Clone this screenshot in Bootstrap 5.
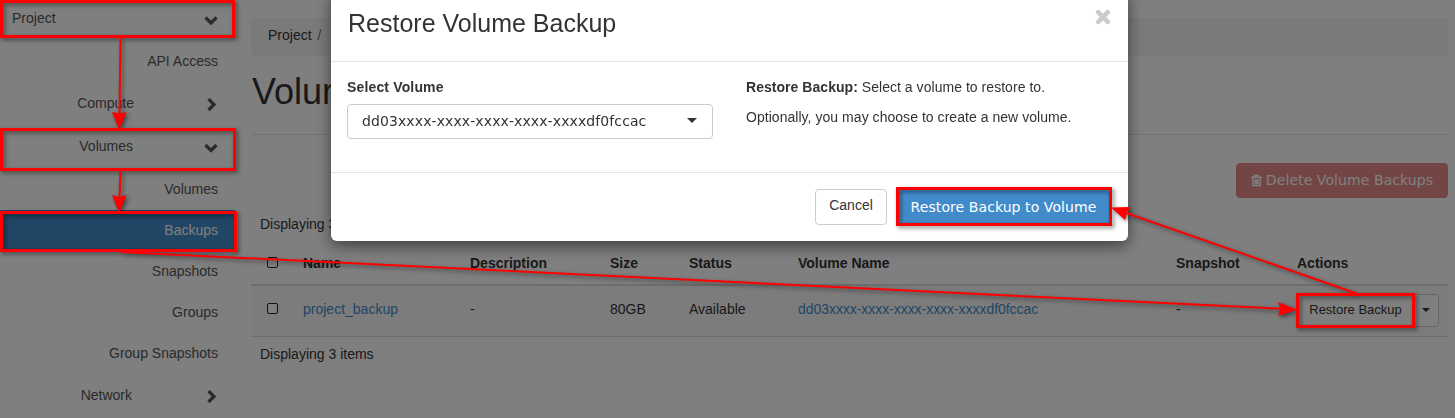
<!DOCTYPE html>
<html lang="en">
<head>
<meta charset="utf-8">
<meta name="viewport" content="width=device-width, initial-scale=1">
<title>Volume Backups</title>
<link href="https://cdn.jsdelivr.net/npm/bootstrap@5.3.0/dist/css/bootstrap.min.css" rel="stylesheet">
<style>
body{font-family:"Liberation Sans",Arial,sans-serif;font-size:14px;line-height:20px;color:#333;background:#fff;height:418px;overflow:hidden}
.wide-face{font-family:"DejaVu Sans",sans-serif}
.side{width:235px;flex:none}
.side-row{height:42px;padding:0 17px 0 0;color:#555;flex:none}
.side-row.top-level{height:40px;padding:0 17px 4px 12px}
.side-row.sub{height:41px;padding-bottom:2px}
.side-row.grp{width:235px}
.grp span{width:134px;text-align:right}
.side-row.chosen{background:#428bca;color:#fff}
.side-row svg{width:14px;height:14px;fill:none;stroke:#555;stroke-width:3.2;margin-top:4px}
.content{margin-left:16px;width:1197px;flex:none;padding-top:18px}
.crumbs{height:38px;background:#f5f5f5;border-radius:4px;padding:7px 17px 0;margin:0}
.page-title{font-size:36px;line-height:40px;margin:16px 0 0 1px;color:#333}
.rule{height:1px;background:#e5e5e5;margin-top:22px}
.btn-del{background:#e78d8a;border:1px solid #e48481;color:#fff;height:35px;width:212px;border-radius:4px;margin-top:28px;font-size:14px;letter-spacing:.08px;padding:0;white-space:nowrap}
.grid-table{table-layout:fixed;width:1197px;margin:0;color:#333;--bs-table-bg:transparent}
.grid-table th{height:42px;padding:0 8px 2px;border-bottom:2px solid #ddd;vertical-align:middle}
.grid-table td{height:51px;padding:0 8px 4px;border-bottom:1px solid #ddd;background:#f9f9f9;vertical-align:middle}
.grid-table a{color:#428bca;text-decoration:none}
.box{display:block;width:11px;height:11px;border:1px solid #222;border-radius:2px;background:#fff;margin-left:8px}
.act{height:33px;border:1px solid #ccc;background:#fff;font-size:13px;color:#333;border-radius:4px;padding:0;width:142px}
.act .lbl{width:116px;text-align:center;border-right:1px solid #ccc;line-height:29px;padding-bottom:2px}
.tri{width:0;height:0;border:4.500px solid transparent;border-top-color:#333;border-bottom:0}
.modal-dialog{width:797px;max-width:797px;margin:-10px 0 0 331px}
.modal-content{height:251px;border:0;border-radius:6px;box-shadow:0 5px 15px rgba(0,0,0,.5);color:#333}
.modal-header{height:72px;padding:15px 16px;border-bottom:1px solid #e5e5e5;align-items:flex-start;flex:none}
.modal-title{font-size:25px;line-height:36px;padding-left:1px}
.modal-body{padding:15px 16px 0;letter-spacing:.04px}
.modal-footer{height:69px;padding:0;border-top:1px solid #e5e5e5;flex:none}
.picker{width:366px;height:35px;border:1px solid #ccc;border-radius:4px;padding:0 15px 2px 14px;margin-top:7px;letter-spacing:.1px}
.btn-plain{width:72px;height:36px;border:1px solid #ccc;background:#fff;border-radius:4px;font-size:14px;line-height:20px;padding:0 0 4px;color:#333}
.btn-go{width:213px;height:35px;background:#428bca;border:0;border-radius:3px;color:#fff;font-size:14px;letter-spacing:.08px;padding:0}
.notes{z-index:2000;pointer-events:none}
</style>
</head>
<body>
<div class="d-flex">
  <nav class="side d-flex flex-column">
    <div class="side-row top-level d-flex align-items-center justify-content-between"><span>Project</span><svg viewBox="0 0 14 14"><path d="M1.5 4.500 7 10 12.500 4.500"/></svg></div>
    <div class="side-row d-flex align-items-center justify-content-end">API Access</div>
    <div class="side-row grp d-flex align-items-center justify-content-between"><span>Compute</span><svg viewBox="0 0 14 14"><path d="M4.500 1 10 6.500 4.500 12"/></svg></div>
    <div class="side-row grp d-flex align-items-center justify-content-between" style="height:44px"><span style="width:133px">Volumes</span><svg viewBox="0 0 14 14"><path d="M1.500 4 7 9.500 12.500 4"/></svg></div>
    <div class="side-row d-flex align-items-center justify-content-end">Volumes</div>
    <div class="side-row sub chosen d-flex align-items-center justify-content-end">Backups</div>
    <div class="side-row sub d-flex align-items-center justify-content-end">Snapshots</div>
    <div class="side-row sub d-flex align-items-center justify-content-end">Groups</div>
    <div class="side-row sub d-flex align-items-center justify-content-end">Group Snapshots</div>
    <div class="side-row grp d-flex align-items-center justify-content-between"><span style="width:132px">Network</span><svg viewBox="0 0 14 14"><path d="M4.500 1 10 6.500 4.500 12"/></svg></div>
  </nav>
  <main class="content">
    <div class="crumbs">Project <span class="text-secondary ps-1" style="margin-left:-2px">/</span></div>
    <h1 class="page-title fw-normal">Volume Backups</h1>
    <div class="rule"></div>
    <div class="d-flex justify-content-end">
      <div class="btn btn-del wide-face d-flex align-items-center justify-content-center gap-1"><svg width="11" height="13" viewBox="0 0 12 13" fill="none" stroke="#fff" stroke-width="1.5"><path d="M.2 3h11.600M4 3V1h4v2M2 3v9h8V3M4.400 5v5.500M6 5v5.500M7.600 5v5.500"/></svg><span>Delete Volume Backups</span></div>
    </div>
    <div style="margin-top:16px;padding-left:9px">Displaying 3 items</div>
    <table class="table grid-table" style="margin-top:9px">
      <colgroup><col style="width:44px"><col style="width:167px"><col style="width:140px"><col style="width:79px"><col style="width:109px"><col style="width:378px"><col style="width:121px"><col></colgroup>
      <thead><tr><th><i class="box"></i></th><th>Name</th><th>Description</th><th>Size</th><th>Status</th><th>Volume Name</th><th>Snapshot</th><th>Actions</th></tr></thead>
      <tbody><tr><td><i class="box"></i></td><td><a href="#">project_backup</a></td><td>-</td><td>80GB</td><td>Available</td><td><a href="#" style="letter-spacing:-.05px">dd03xxxx-xxxx-xxxx-xxxx-xxxxdf0fccac</a></td><td>-</td>
      <td class="pb-0"><div class="act d-flex align-items-center"><span class="lbl">Restore Backup</span><span class="tri mx-auto" style="margin-top:-1px"></span></div></td></tr></tbody>
    </table>
    <div style="padding:7px 9px">Displaying 3 items</div>
  </main>
</div>

<div class="modal-backdrop show"></div>
<div class="modal show d-block overflow-hidden" tabindex="-1">
  <div class="modal-dialog">
    <div class="modal-content">
      <div class="modal-header justify-content-between">
        <h4 class="modal-title fw-normal">Restore Volume Backup</h4>
        <svg width="16" height="16" viewBox="0 0 16 16" style="margin:4px 1px 0 0"><path d="M3.200 3.200 12.800 12.800M12.800 3.200 3.200 12.800" stroke="#ccc" stroke-width="4.600" stroke-linecap="round"/></svg>
      </div>
      <div class="modal-body d-flex">
        <div style="width:399px">
          <div class="fw-bold" style="letter-spacing:.15px">Select Volume</div>
          <div class="picker wide-face d-flex align-items-center justify-content-between"><span>dd03xxxx-xxxx-xxxx-xxxx-xxxxdf0fccac</span><span class="tri" style="border-width:5px 5px 0"></span></div>
        </div>
        <div><p style="margin-bottom:10px"><b>Restore Backup:</b> Select a volume to restore to.</p><p class="m-0">Optionally, you may choose to create a new volume.</p></div>
      </div>
      <div class="modal-footer d-flex justify-content-end align-items-center">
        <button class="btn btn-plain m-0">Cancel</button>
        <button class="btn btn-go wide-face m-0" style="margin:0 18px 0 10px!important">Restore Backup to Volume</button>
      </div>
    </div>
  </div>
</div>

<svg class="notes position-absolute top-0 start-0" width="1455" height="418" viewBox="0 0 1455 418" style="filter:drop-shadow(2px 2px 2px rgba(0,0,0,.5))">
  <g fill="none" stroke="#f00" stroke-width="3">
    <rect x="1.500" y="1.500" width="232" height="35"/>
    <rect x="1.500" y="129.500" width="233" height="40"/>
    <rect x="1.500" y="212.500" width="234" height="38"/>
    <rect x="897.500" y="188.500" width="213" height="36"/>
    <rect x="1297.500" y="294.500" width="116" height="32"/>
  </g>
  <g stroke="#f00" stroke-width="2">
    <path d="M120.500 38 119.500 114M120.500 171 119.500 198M121 252 1280 308.700M1358 294 1127 213.200"/>
  </g>
  <g fill="#f00">
    <path d="M112 112 119.500 113.500 126.500 112 119 130ZM112 195 119.500 197 126.500 195 119 213ZM1278 302 1280 309 1278 316 1297 309.700ZM1130 207 1127 213 1125 220 1111 207.500Z"/>
  </g>
</svg>
<script src="https://cdn.jsdelivr.net/npm/bootstrap@5.3.0/dist/js/bootstrap.bundle.min.js"></script>
</body>
</html>
